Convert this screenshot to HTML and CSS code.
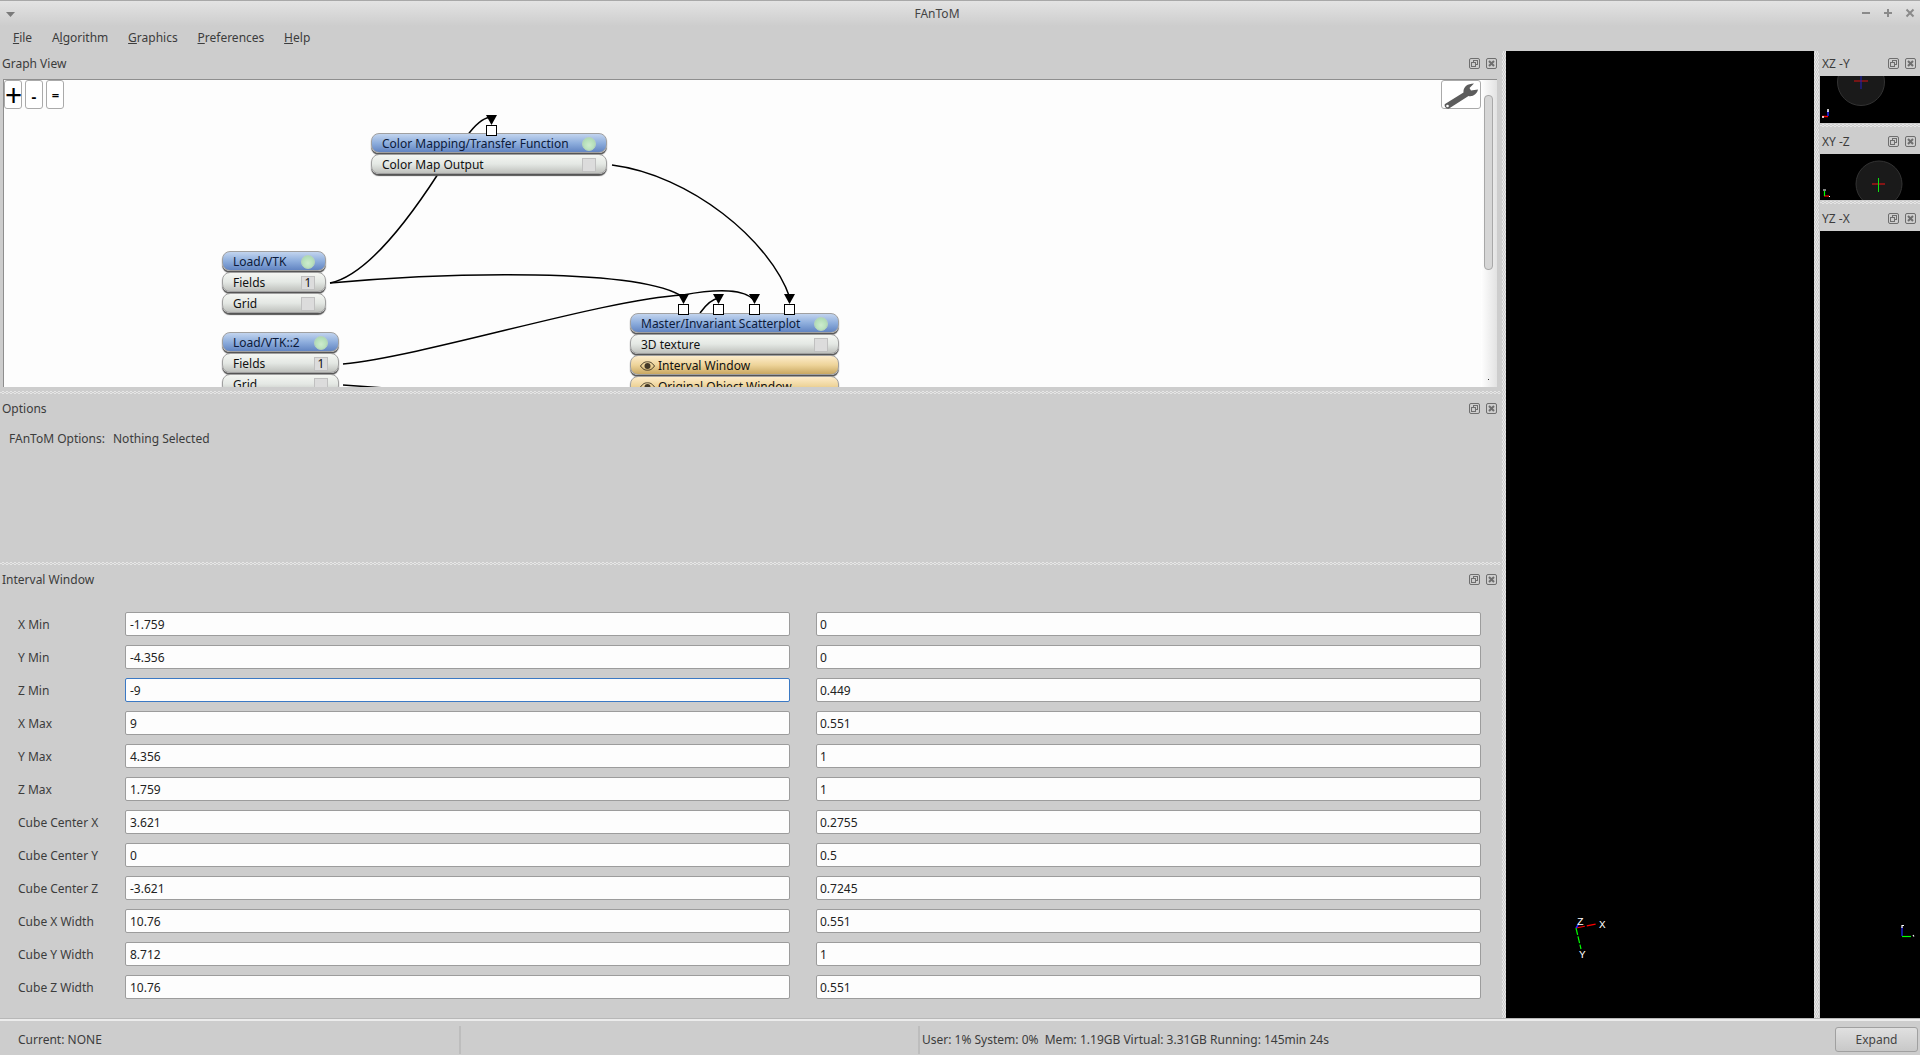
FILE: index.html
```html
<!DOCTYPE html>
<html lang="en">
<head>
<meta charset="utf-8">
<title>FAnToM</title>
<link rel="stylesheet" href="styles.css">
</head>
<body>
<svg class="defs" width="0" height="0" aria-hidden="true">
  <symbol id="i-float" viewBox="0 0 11 11">
    <rect x="0.5" y="0.5" width="10" height="10" rx="1.5" fill="none" stroke="#6e6e6e"/>
    <rect x="4.5" y="2.5" width="4" height="4" fill="none" stroke="#6e6e6e"/>
    <rect x="2.5" y="4.5" width="4" height="4" fill="#ccc" stroke="#6e6e6e"/>
  </symbol>
  <symbol id="i-close" viewBox="0 0 11 11">
    <rect x="0.5" y="0.5" width="10" height="10" rx="1.5" fill="none" stroke="#6e6e6e"/>
    <path d="M3 3L8 8M8 3L3 8" stroke="#6e6e6e" stroke-width="2"/>
  </symbol>
  <symbol id="i-eye" viewBox="0 0 15 10">
    <path d="M0.5 5C3 1.5 5 0.8 7.500 0.8S12 1.500 14.500 5C12 8.500 10 9.200 7.500 9.200S3 8.500 0.500 5Z" fill="none" stroke="#443a28"/>
    <circle cx="7.500" cy="5" r="3" fill="#443a28"/>
  </symbol>
</svg>
<div class="window">
  <header class="titlebar">
    <svg class="win-arrow" width="9" height="5" viewBox="0 0 9 5"><path d="M0 0H9L4.500 5Z" fill="#7a7a7a"/></svg>
    <span class="win-title">FAnToM</span>
    <div class="win-buttons">
      <svg width="10" height="10" viewBox="0 0 10 10"><path d="M1 5H9" stroke="#8a8a8a" stroke-width="2"/></svg>
      <svg width="10" height="10" viewBox="0 0 10 10"><path d="M1 5H9M5 1V9" stroke="#8a8a8a" stroke-width="2"/></svg>
      <svg width="10" height="10" viewBox="0 0 10 10"><path d="M1.500 1.500L8.500 8.500M8.500 1.500L1.500 8.500" stroke="#8a8a8a" stroke-width="2"/></svg>
    </div>
  </header>
  <nav class="menubar">
    <span class="menu-item"><u>F</u>ile</span>
    <span class="menu-item">A<u>l</u>gorithm</span>
    <span class="menu-item"><u>G</u>raphics</span>
    <span class="menu-item"><u>P</u>references</span>
    <span class="menu-item"><u>H</u>elp</span>
  </nav>
  <main class="main">
    <div class="left">
      <section class="dock dock-graph">
        <div class="dock-title"><span>Graph View</span><div class="dock-btns"><svg><use href="#i-float"/></svg><svg><use href="#i-close"/></svg></div></div>
        <div class="graph-wrap">
          <div class="canvas">
            <svg class="wires" width="1500" height="400" viewBox="0 0 1500 400">
              <g fill="none" stroke="#000" stroke-width="1.500">
                <path d="M612 165C690 175 770 240 790 298"/>
                <path d="M330 283C450 272 640 268 683 297"/>
                <path d="M330 283C365 276 405 225 438 174L470 132C478 122 485 117 492 117"/>
                <path d="M343 364C430 355 600 300 683 295C720 288 745 290 754 300"/>
                <path d="M343 385L385 388"/>
                <path d="M700 313C705 306 712 299 719 298"/>
              </g>
            </svg>
            <div class="tools">
              <button class="tool tool-plus">+</button>
              <button class="tool tool-minus">-</button>
              <button class="tool tool-eq">=</button>
            </div>
            <button class="wrench">
              <svg width="36" height="28" viewBox="0 0 36 28"><path d="M2 23L20.500 11.500C20 6.500 24 2.500 31 2.500L26.500 7L28 9.500L35 8.500C34 13 30 16 25.500 15L6 27.500C3.500 28.800 0.500 25 2 23Z" fill="#5c5c5c"/><circle cx="4.500" cy="25" r="1.300" fill="#fff"/></svg>
            </button>
            <div class="node n1">
              <div class="row head"><span>Color Mapping/Transfer Function</span><i class="led"></i></div>
              <div class="row"><span>Color Map Output</span><i class="box"></i></div>
            </div>
            <div class="node n2">
              <div class="row head"><span>Load/VTK</span><i class="led"></i></div>
              <div class="row"><span>Fields</span><i class="box">1</i></div>
              <div class="row"><span>Grid</span><i class="box"></i></div>
            </div>
            <div class="node n3">
              <div class="row head"><span>Load/VTK::2</span><i class="led"></i></div>
              <div class="row"><span>Fields</span><i class="box">1</i></div>
              <div class="row"><span>Grid</span><i class="box"></i></div>
            </div>
            <div class="node n4">
              <div class="row head"><span>Master/Invariant Scatterplot</span><i class="led"></i></div>
              <div class="row"><span>3D texture</span><i class="box"></i></div>
              <div class="row win"><svg class="eye"><use href="#i-eye"/></svg><span>Interval Window</span></div>
              <div class="row win"><svg class="eye"><use href="#i-eye"/></svg><span>Original Object Window</span></div>
            </div>
            <svg class="wires" width="1500" height="400" viewBox="0 0 1500 400">
              <g fill="#000">
                <path d="M486 115H497L491.500 125Z"/>
                <path d="M678 294H689L683.500 304Z"/>
                <path d="M713 294H724L718.500 304Z"/>
                <path d="M749 294H760L754.500 304Z"/>
                <path d="M784 294H795L789.500 304Z"/>
              </g>
              <g fill="#fff" stroke="#000">
                <rect x="486.500" y="125.500" width="10" height="10"/>
                <rect x="678.500" y="304.500" width="10" height="10"/>
                <rect x="713.500" y="304.500" width="10" height="10"/>
                <rect x="749.500" y="304.500" width="10" height="10"/>
                <rect x="784.500" y="304.500" width="10" height="10"/>
              </g>
            </svg>
          </div>
          <div class="scrollbar"><div class="slider"></div><div class="scroll-dot"></div></div>
        </div>
      </section>
      <div class="split-h"></div>
      <section class="dock dock-options">
        <div class="dock-title"><span>Options</span><div class="dock-btns"><svg><use href="#i-float"/></svg><svg><use href="#i-close"/></svg></div></div>
        <p class="options-text"><span>FAnToM Options:</span><span>Nothing Selected</span></p>
      </section>
      <div class="split-h"></div>
      <section class="dock dock-interval">
        <div class="dock-title"><span>Interval Window</span><div class="dock-btns"><svg><use href="#i-float"/></svg><svg><use href="#i-close"/></svg></div></div>
        <div class="form">
          <div class="form-row"><label>X Min</label><div class="field">-1.759</div><div class="field">0</div></div>
          <div class="form-row"><label>Y Min</label><div class="field">-4.356</div><div class="field">0</div></div>
          <div class="form-row"><label>Z Min</label><div class="field focus">-9</div><div class="field">0.449</div></div>
          <div class="form-row"><label>X Max</label><div class="field">9</div><div class="field">0.551</div></div>
          <div class="form-row"><label>Y Max</label><div class="field">4.356</div><div class="field">1</div></div>
          <div class="form-row"><label>Z Max</label><div class="field">1.759</div><div class="field">1</div></div>
          <div class="form-row"><label>Cube Center X</label><div class="field">3.621</div><div class="field">0.2755</div></div>
          <div class="form-row"><label>Cube Center Y</label><div class="field">0</div><div class="field">0.5</div></div>
          <div class="form-row"><label>Cube Center Z</label><div class="field">-3.621</div><div class="field">0.7245</div></div>
          <div class="form-row"><label>Cube X Width</label><div class="field">10.76</div><div class="field">0.551</div></div>
          <div class="form-row"><label>Cube Y Width</label><div class="field">8.712</div><div class="field">1</div></div>
          <div class="form-row"><label>Cube Z Width</label><div class="field">10.76</div><div class="field">0.551</div></div>
        </div>
      </section>
    </div>
    <div class="split-v"></div>
    <div class="view-main">
      <svg class="axis-main" width="50" height="50" viewBox="0 0 50 50">
        <path d="M9 18L29 14" stroke="#f00" stroke-width="1.200" stroke-dasharray="9 2"/>
        <path d="M9 18L14 39" stroke="#0f0" stroke-width="1.200" stroke-dasharray="7 1.500"/>
        <path d="M9 18L11 15" stroke="#22f" stroke-width="1.500"/>
        <text x="10" y="15" class="axis-label">Z</text>
        <text x="32" y="18" class="axis-label">X</text>
        <text x="12" y="48" class="axis-label">Y</text>
      </svg>
    </div>
    <div class="split-v split-v-r"></div>
    <aside class="right">
      <div class="mini-title"><span>XZ -Y</span><div class="dock-btns"><svg><use href="#i-float"/></svg><svg><use href="#i-close"/></svg></div></div>
      <div class="mini-view mv-xz">
        <svg width="100" height="47" viewBox="0 0 100 47">
          <circle cx="41" cy="6" r="23.500" fill="#1a1a1a" stroke="#333"/>
          <path d="M34 5H48" stroke="#d01010"/>
          <path d="M41 0V13" stroke="#2020c0"/>
          <path d="M2 40.500H8" stroke="#f00" stroke-width="1.500"/>
          <path d="M8 40V35" stroke="#22f" stroke-width="1.500"/>
          <path d="M2 41H4M8 36V33" stroke="#fff" stroke-width="1.500"/>
        </svg>
      </div>
      <div class="split-mini"></div>
      <div class="mini-title"><span>XY -Z</span><div class="dock-btns"><svg><use href="#i-float"/></svg><svg><use href="#i-close"/></svg></div></div>
      <div class="mini-view mv-xy">
        <svg width="100" height="46" viewBox="0 0 100 46">
          <circle cx="59" cy="30" r="23" fill="#1a1a1a" stroke="#333"/>
          <path d="M52 30H65" stroke="#f01010"/>
          <path d="M58.500 24V38" stroke="#10e010"/>
          <path d="M4 42H9" stroke="#f00" stroke-width="1.200"/>
          <path d="M4.500 42V37" stroke="#0f0" stroke-width="1.200"/>
          <path d="M3 36H6M9 42.500H10" stroke="#fff" stroke-width="1.200"/>
        </svg>
      </div>
      <div class="split-mini"></div>
      <div class="mini-title"><span>YZ -X</span><div class="dock-btns"><svg><use href="#i-float"/></svg><svg><use href="#i-close"/></svg></div></div>
      <div class="mini-view mv-yz">
        <svg class="axis-yz" width="16" height="16" viewBox="0 0 16 16">
          <path d="M2 13V4" stroke="#22f" stroke-width="1.200"/>
          <path d="M2 13.500H11" stroke="#0f0" stroke-width="1.200"/>
          <path d="M2 2.500H4M2 2V5M13 12L14 13.500" stroke="#fff" stroke-width="1.200"/>
        </svg>
      </div>
    </aside>
  </main>
  <footer class="statusbar">
    <div class="st st-current">Current: NONE</div>
    <div class="st st-spacer"></div>
    <div class="st st-info">User: 1% System: 0%&nbsp; Mem: 1.19GB Virtual: 3.31GB Running: 145min 24s</div>
    <button class="expand">Expand</button>
  </footer>
</div>
</body>
</html>
```
FILE: styles.css
```css
* { box-sizing: border-box; }
html, body { margin: 0; height: 100%; }
body { font: 12px/16px "Noto Sans", sans-serif; color: #3c3c3c; background: #cdcdcd; overflow: hidden; }
.defs { position: absolute; }
.window { width: 1920px; height: 1055px; display: flex; flex-direction: column; }

.titlebar { position: relative; height: 26px; flex: none; border-top: 1px solid #a8a8a8; background: linear-gradient(#e3e3e3, #cdcdcd); display: flex; align-items: center; justify-content: center; padding: 1px 46px 0 0; }
.win-arrow { position: absolute; left: 6px; top: 11px; }
.win-title { color: #444; font-size: 12px; }
.win-buttons { position: absolute; right: 5px; top: 7px; display: flex; gap: 12px; }

.menubar { height: 25px; flex: none; display: flex; padding: 0 3px 1px; align-items: center; color: #3c3c3c; }
.menu-item { padding: 0 9.900px; }

.main { flex: 1; min-height: 0; display: flex; }
.left { width: 1501px; flex: none; display: flex; flex-direction: column; }
.split-h { height: 6px; flex: none; border-top: 2px solid #cdcdcd; border-bottom: 1px solid #cdcdcd; background: repeating-conic-gradient(#e6e6e6 0 25%, #cdcdcd 0 50%) 0 0 / 4px 2px; }
.split-v { width: 5px; flex: none; border-left: 1px solid #cdcdcd; background: repeating-conic-gradient(#e6e6e6 0 25%, #cdcdcd 0 50%) 0 0 / 2px 4px; }
.split-v-r { width: 6px; border-left: 0; border-right: 1px solid #cdcdcd; }

.dock { display: flex; flex-direction: column; min-height: 0; }
.dock-graph { height: 338px; flex: none; }
.dock-options { height: 165px; flex: none; }
.dock-interval { flex: 1; }
.dock-title { height: 28px; flex: none; display: flex; align-items: center; justify-content: space-between; padding: 0 4px 3px 2px; }
.dock-options .dock-title, .dock-interval .dock-title { padding-bottom: 1px; }
.dock-btns { display: flex; gap: 6px; }
.dock-btns svg { width: 11px; height: 11px; }

.graph-wrap { flex: 1; min-height: 0; margin: 0 4px 2px 3px; display: flex; border-top: 1px solid #8e8e8e; border-left: 1px solid #8e8e8e; background: #fdfdfd; }
.canvas { position: relative; flex: 1; overflow: hidden; background: #fdfdfd; }
.wires { position: absolute; left: -4px; top: -80px; pointer-events: none; }
.tools { position: absolute; left: 0; top: 0; display: flex; gap: 3px; }
.tool { width: 18px; height: 29px; padding: 0; border: 1px solid #aaa; border-radius: 3px; background: #fff; color: #000; font-family: "Noto Sans", sans-serif; }
.tool-plus { font-size: 30px; line-height: 26px; }
.tool-minus { font-size: 15px; font-weight: 700; padding-top: 3px; }
.tool-eq { font-size: 13px; font-weight: 700; padding-left: 1px; }
.wrench { position: absolute; right: 0; top: 0; width: 40px; height: 29px; padding: 0; border: 1px solid #aaa; border-radius: 3px; background: #fff; display: flex; align-items: center; justify-content: center; }

.node { position: absolute; display: flex; flex-direction: column; color: #111; }
.n1 { left: 367px; top: 53px; width: 236px; }
.n2 { left: 218px; top: 171px; width: 104px; }
.n3 { left: 218px; top: 252px; width: 117px; }
.n4 { left: 626px; top: 233px; width: 209px; }
.row { height: 20px; margin-bottom: 1px; display: flex; align-items: center; justify-content: space-between; padding: 1px 10px 0; border: 1px solid #a0a0a0; border-radius: 8px; background: linear-gradient(#f4f6f2, #e4e8e4 50%, #bfc1bd); box-shadow: 0 2px 1px #555; white-space: nowrap; }
.head { background: linear-gradient(#c2d4ee, #8eaedd 50%, #6285c2); color: #0c1a3a; }
.win { justify-content: flex-start; gap: 3px; padding-left: 9px; background: linear-gradient(#fdeccb, #eed49a 50%, #c9a862); }
.led { width: 14px; height: 14px; border-radius: 50%; background: radial-gradient(circle at 50% 60%, #cdeccd, #a4d6ac); border: 1px solid #b8d4bb; flex: none; }
.box { width: 14px; height: 14px; background: #dcdcdc; border: 1px solid #c0c0c0; flex: none; font-style: normal; font-size: 12px; line-height: 12px; text-align: center; color: #111; }
.eye { width: 15px; height: 10px; flex: none; }

.scrollbar { position: relative; width: 16px; flex: none; background: linear-gradient(90deg, #fff, #e2e2e2); }
.slider { position: absolute; left: 3px; top: 15px; width: 9px; height: 175px; border: 1px solid #a8a8a8; border-radius: 4px; background: #d6d6d6; }
.scroll-dot { position: absolute; left: 7px; bottom: 7px; width: 1px; height: 1px; background: #333; }

.options-text { margin: 8px 0 0 9px; display: flex; gap: 8px; }

.form { padding: 18px 19px 0 18px; display: flex; flex-direction: column; gap: 9px; }
.form-row { height: 24px; display: grid; grid-template-columns: 107px 665px 691px; align-items: center; }
.form-row label { padding-top: 1px; }
.form-row .field:last-child { margin-left: 26px; padding-left: 3px; }
.field { height: 24px; line-height: 22px; padding: 1px 4px 0; background: #fdfdfd; border: 1px solid #9c9c9c; border-radius: 2px; color: #222; }
.focus { border-color: #3b79c4; }

.view-main { position: relative; width: 308px; flex: none; background: #000; }
.axis-main { position: absolute; left: 61px; top: 859px; }
.axis-label { font: 11px "Liberation Mono", monospace; fill: #fff; }

.right { flex: 1; display: flex; flex-direction: column; min-width: 0; }
.mini-title { height: 25px; flex: none; display: flex; align-items: center; justify-content: space-between; padding: 0 4px 0 2px; }
.mini-view { position: relative; background: #000; flex: none; overflow: hidden; }
.mini-view > svg { display: block; }
.mv-xz { height: 47px; }
.mv-xy { height: 46px; }
.mv-yz { flex: 1; }
.axis-yz { position: absolute; left: 80px; top: 692px; }
.split-mini { height: 6px; flex: none; border-top: 1px solid #cdcdcd; border-bottom: 2px solid #cdcdcd; background: repeating-conic-gradient(#e6e6e6 0 25%, #cdcdcd 0 50%) 0 0 / 4px 2px; }

.statusbar { height: 37px; flex: none; display: flex; align-items: center; border-top: 1px solid #b8b8b8; box-shadow: inset 0 2px 0 #ececec; padding: 5px 2px 0 0; }
.st { height: 28px; line-height: 28px; white-space: nowrap; }
.st-current { width: 461px; padding-left: 18px; border-right: 2px solid #bdbdbd; }
.st-spacer { width: 459px; border-right: 2px solid #bdbdbd; }
.st-info { flex: 1; padding-left: 2px; }
.expand { width: 83px; height: 25px; padding: 0; border: 1px solid #a0a0a0; border-radius: 3px; background: linear-gradient(#e0e0e0, #c8c8c8); color: #444; font: 12px "Noto Sans", sans-serif; }
```
